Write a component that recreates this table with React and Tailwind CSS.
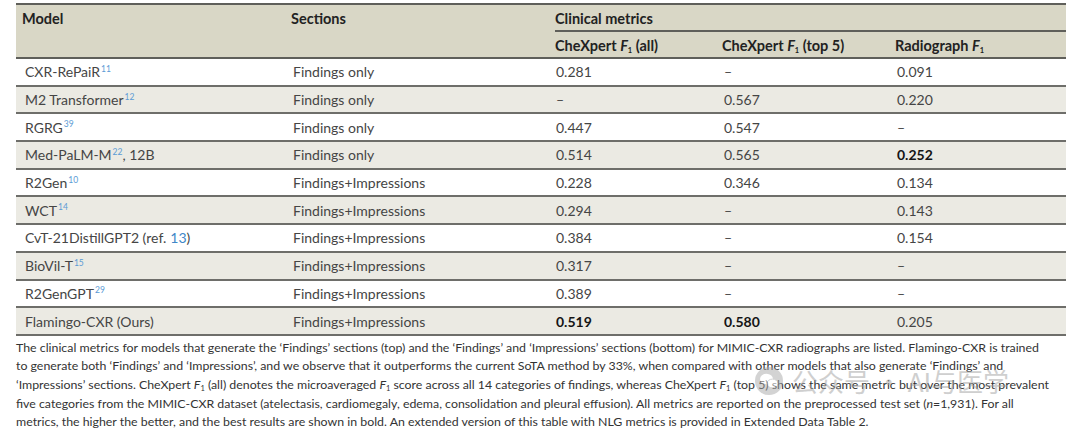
import React from "react";

const cols = "grid grid-cols-[268px_263px_168px_173px_178px]";

const Sup = ({ children }) => (
  <sup className="text-[8.5px] text-[#5b9bd5] ml-[1px] relative -top-[3px]">{children}</sup>
);

const F1 = () => (
  <span>
    <i>F</i>
    <sub className="text-[7.5px]">1</sub>
  </span>
);

const rows = [
  { m: <>CXR-RePaiR<Sup>11</Sup></>, s: "Findings only", a: "0.281", b: "–", c: "0.091" },
  { m: <>M2 Transformer<Sup>12</Sup></>, s: "Findings only", a: "–", b: "0.567", c: "0.220" },
  { m: <>RGRG<Sup>39</Sup></>, s: "Findings only", a: "0.447", b: "0.547", c: "–" },
  { m: <>Med-PaLM-M<Sup>22</Sup>, 12B</>, s: "Findings only", a: "0.514", b: "0.565", c: "0.252", cb: true },
  { m: <>R2Gen<Sup>10</Sup></>, s: "Findings+Impressions", a: "0.228", b: "0.346", c: "0.134" },
  { m: <>WCT<Sup>14</Sup></>, s: "Findings+Impressions", a: "0.294", b: "–", c: "0.143" },
  { m: <>CvT-21DistillGPT2 (ref.<span className="ml-[4px] text-[#3f87c8]">13</span>)</>, s: "Findings+Impressions", a: "0.384", b: "–", c: "0.154" },
  { m: <>BioVil-T<Sup>15</Sup></>, s: "Findings+Impressions", a: "0.317", b: "–", c: "–" },
  { m: <>R2GenGPT<Sup>29</Sup></>, s: "Findings+Impressions", a: "0.389", b: "–", c: "–" },
  { m: <>Flamingo-CXR (Ours)</>, s: "Findings+Impressions", a: "0.519", b: "0.580", c: "0.205", ab: true, bb: true },
];

function Cell({ children, bold }) {
  return (
    <div className={"pl-[9px] flex items-center whitespace-nowrap " + (bold ? "font-bold text-[#151515]" : "")}>{children}</div>
  );
}

export default function App() {
  return (
    <div className="relative w-[1080px] h-[430px] bg-white overflow-hidden text-[#454545]" style={{ fontFamily: "Lato, 'Open Sans', sans-serif" }}>
      <div className="pt-[3px] pl-[16px]">
        <div className="w-[1050px] text-[14px]">
          {/* header */}
          <div className={cols + " bg-[#d9d7c6] border-t-2 border-b-2 border-[#5f5f5a] h-[56px] font-bold text-[#222] text-[14.5px]"}>
            <div className="pl-[6px] pt-[3px]">Model</div>
            <div className="pl-[7px] pt-[3px]">Sections</div>
            <div className="col-span-3 pl-[8px] flex flex-col">
              <div className="pt-[3px] h-[27px] border-b-2 border-[#5f5f5a]">Clinical metrics</div>
              <div className="grid grid-cols-[167px_173px_171px] pt-[3px] whitespace-nowrap">
                <div>CheXpert <F1 /> (all)</div>
                <div>CheXpert <F1 /> (top 5)</div>
                <div>Radiograph <F1 /></div>
              </div>
            </div>
          </div>
          {/* body */}
          {rows.map((r, i) => (
            <div
              key={i}
              className={cols + " h-[27.7px] border-b-2 border-[#6e6e6a] " + (i % 2 === 1 ? "bg-[#ebeae3]" : "bg-white")}
            >
              <Cell>{r.m}</Cell>
              <Cell>{r.s}</Cell>
              <Cell bold={r.ab}>{r.a}</Cell>
              <Cell bold={r.bb}>{r.b}</Cell>
              <Cell bold={r.cb}>{r.c}</Cell>
            </div>
          ))}
        </div>
        {/* caption */}
        <div className="pt-[3px] text-[12.35px] leading-[18.6px] text-[#333] whitespace-nowrap">
          <div>The clinical metrics for models that generate the ‘Findings’ sections (top) and the ‘Findings’ and ‘Impressions’ sections (bottom) for MIMIC-CXR radiographs are listed. Flamingo-CXR is trained</div>
          <div>to generate both ‘Findings’ and ‘Impressions’, and we observe that it outperforms the current SoTA method by 33%, when compared with other models that also generate ‘Findings’ and</div>
          <div>‘Impressions’ sections. CheXpert <F1 /> (all) denotes the microaveraged <F1 /> score across all 14 categories of findings, whereas CheXpert <F1 /> (top 5) shows the same metric but over the most prevalent</div>
          <div>five categories from the MIMIC-CXR dataset (atelectasis, cardiomegaly, edema, consolidation and pleural effusion). All metrics are reported on the preprocessed test set (<i>n</i>=1,931). For all</div>
          <div>metrics, the higher the better, and the best results are shown in bold. An extended version of this table with NLG metrics is provided in Extended Data Table 2.</div>
        </div>
      </div>
      {/* watermark */}
      <div className="absolute left-[754px] top-[366px] flex items-center gap-[8px] text-[#a0a0a0] opacity-50 pointer-events-none">
        <svg width="30" height="30" viewBox="0 0 30 30">
          <circle cx="15" cy="15" r="14" fill="#a8a8a8" />
          <ellipse cx="12.5" cy="13" rx="6.5" ry="5.2" fill="#fff" />
          <ellipse cx="18.5" cy="17.5" rx="5.5" ry="4.4" fill="#fff" stroke="#a8a8a8" strokeWidth="1" />
        </svg>
        <span className="text-[26px] leading-none" style={{ fontFamily: "'Noto Sans CJK SC', sans-serif" }}>公众号 · AI与医学</span>
      </div>
    </div>
  );
}
